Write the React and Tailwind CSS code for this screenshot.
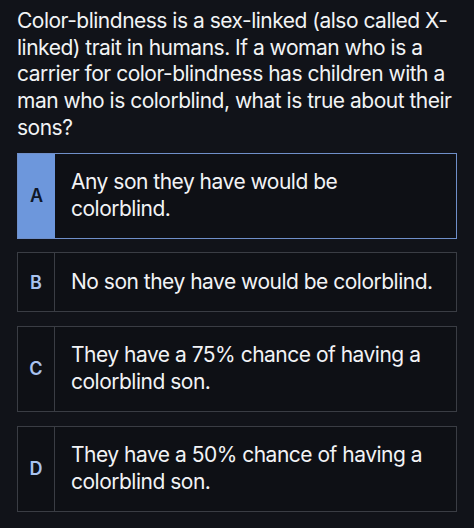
const options = [
  { letter: "A", lines: ["Any son they have would be", "colorblind."], selected: true },
  { letter: "B", lines: ["No son they have would be colorblind."] },
  { letter: "C", lines: ["They have a 75% chance of having a", "colorblind son."] },
  { letter: "D", lines: ["They have a 50% chance of having a", "colorblind son."] },
];

function Option({ letter, lines, selected }) {
  return (
    <div
      className={`flex border ${
        selected ? "border-[#6f8fc9]" : "border-[#3a3d44]"
      } bg-[#0e1015]`}
    >
      <div
        className={`w-[37px] shrink-0 flex items-center justify-center text-[18px] font-semibold ${
          selected
            ? "bg-[#6d97dc] text-[#0f1726]"
            : "border-r border-[#3a3d44] text-[#a9c3ef]"
        }`}
      >
        {letter}
      </div>
      <div className="flex-1 py-[15.5px] pl-[16px] text-[21px] leading-[26.7px] tracking-[-0.5px] text-[#f2f3f5] whitespace-nowrap">
        {lines.map((l, i) => (
          <div key={i}>{l}</div>
        ))}
      </div>
    </div>
  );
}

export default function App() {
  return (
    <div
      className="w-[474px] h-[528px] bg-[#111319] px-[17px] pt-[8px] overflow-hidden"
      style={{ fontFamily: "Inter, 'Liberation Sans', sans-serif" }}
    >
      <p className="text-[21px] leading-[26.7px] text-[#f2f3f5] tracking-[-0.5px] whitespace-nowrap">
        Color-blindness is a sex-linked (also called X-
        <br />
        linked) trait in humans. If a woman who is a
        <br />
        carrier for color-blindness has children with a
        <br />
        man who is colorblind, what is true about their
        <br />
        sons?
      </p>
      <div className="mt-[11px] w-full flex flex-col gap-[13.5px]">
        {options.map((o) => (
          <Option key={o.letter} {...o} />
        ))}
      </div>
    </div>
  );
}
